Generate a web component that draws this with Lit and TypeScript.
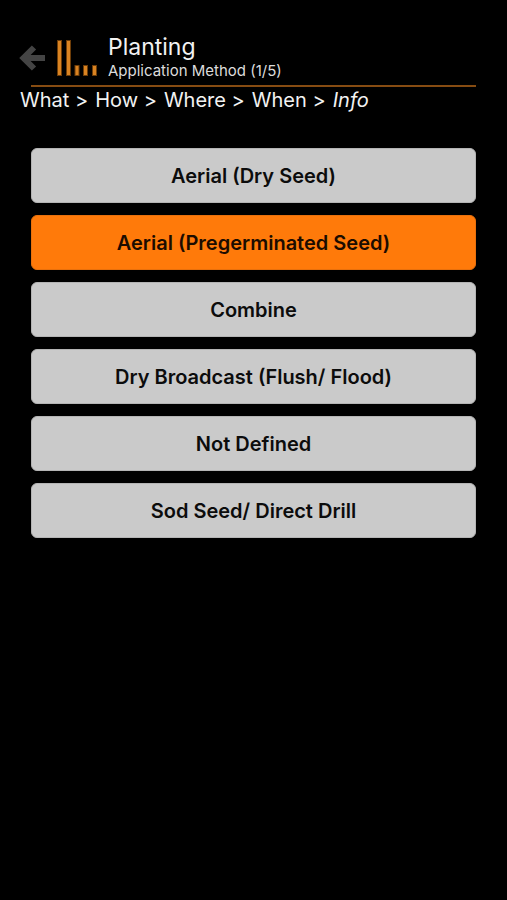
import { LitElement, html, css } from "lit";
import { customElement, state } from "lit/decorators.js";
import { classMap } from "lit/directives/class-map.js";

const METHODS = [
  "Aerial (Dry Seed)",
  "Aerial (Pregerminated Seed)",
  "Combine",
  "Dry Broadcast (Flush/ Flood)",
  "Not Defined",
  "Sod Seed/ Direct Drill",
];

const STEPS = ["What", "How", "Where", "When"];

@customElement("app-root")
export class AppRoot extends LitElement {
  static styles = css`
    :host {
      display: block;
      box-sizing: border-box;
      min-height: 100vh;
      padding-top: 33px;
      background: #000;
      color: #f2f2f2;
      font-family: Inter, "Liberation Sans", sans-serif;
    }
    header {
      display: flex;
      align-items: center;
      height: 50px;
      padding: 0 19px 2px;
    }
    .back {
      display: flex;
      margin: 0 12px 0 0;
      padding: 0;
      border: 0;
      background: none;
      color: #444;
      cursor: pointer;
    }
    .logo {
      margin-right: 11px;
    }
    h1 {
      margin: 0;
      font-size: 23px;
      line-height: 26px;
      font-weight: 400;
    }
    .sub {
      margin: 0;
      font-size: 15px;
      line-height: 22px;
      color: #dcdcdc;
    }
    .rule {
      height: 2px;
      margin: 0 31px;
      border: 0;
      background: #864c12;
    }
    .steps {
      display: flex;
      gap: 7px;
      margin: 0;
      padding: 0 20px;
      list-style: none;
      font-size: 20px;
      line-height: 26px;
    }
    .methods {
      display: flex;
      flex-direction: column;
      gap: 12px;
      padding: 35px 31px;
    }
    .method {
      height: 55px;
      border: 1px solid #b4b4b4;
      border-radius: 6px;
      background: #cacaca;
      color: #0c0c0c;
      font: 600 20px/24px Inter, "Liberation Sans", sans-serif;
      cursor: pointer;
    }
    .method.selected {
      border-color: #e8700c;
      background: #ff7a0a;
      color: #1c0c00;
    }
  `;

  @state() private selected = METHODS[1];

  render() {
    return html`
      <header>
        <button class="back" aria-label="Back">
          <svg width="26" height="26" viewBox="0 0 26 26" fill="none" stroke="currentColor" stroke-width="6">
            <path d="M26 13H5M15 2.5L4.5 13L15 23.5" />
          </svg>
        </button>
        <svg class="logo" width="40" height="38" viewBox="0 0 40 38" fill="#d98322" stroke="#6e3d08" aria-hidden="true">
          <rect x="0.5" y="1.5" width="4" height="35" />
          <rect x="9.5" y="1.5" width="4" height="35" />
          <rect x="18" y="26.5" width="4" height="10" />
          <rect x="26.5" y="26.5" width="4" height="10" />
          <rect x="35.5" y="26.5" width="4" height="10" />
        </svg>
        <div>
          <h1>Planting</h1>
          <p class="sub">Application Method (1/5)</p>
        </div>
      </header>
      <hr class="rule" />
      <ol class="steps">
        ${STEPS.map((step) => html`<li>${step} &gt;</li>`)}
        <li><em>Info</em></li>
      </ol>
      <main class="methods">
        ${METHODS.map(
          (method) => html`<button
            class=${classMap({ method: true, selected: method === this.selected })}
            aria-pressed=${method === this.selected}
            @click=${() => (this.selected = method)}
          >${method}</button>`
        )}
      </main>
    `;
  }
}
